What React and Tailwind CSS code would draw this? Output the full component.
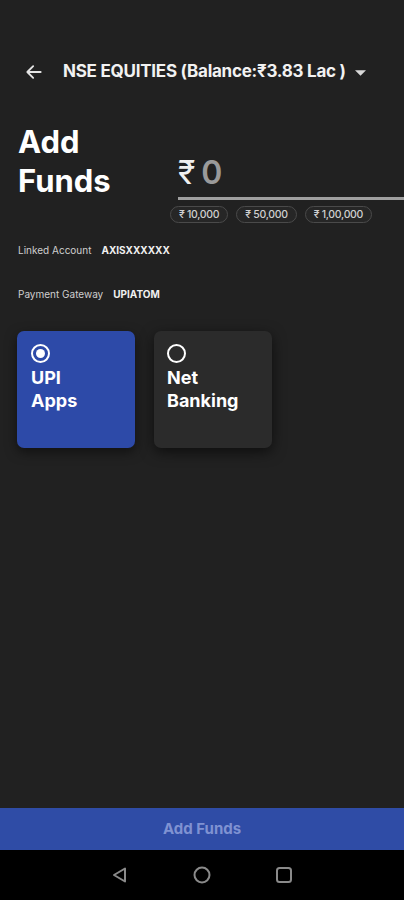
import React from "react";

const chips = ["₹ 10,000", "₹ 50,000", "₹ 1,00,000"];

const details = [
    { label: "Linked Account", value: "AXISXXXXXX" },
    { label: "Payment Gateway", value: "UPIATOM" },
];

const Radio = ({ checked }) => (
    <div className="w-[19px] h-[19px] rounded-full border-2 border-white flex items-center justify-center">
        {checked && <div className="w-[9px] h-[9px] rounded-full bg-white" />}
    </div>
);

export default function App() {
    return (
        <div
            className="w-[404px] h-[900px] bg-[#212121] flex flex-col text-white"
            style={{ fontFamily: "Inter, 'Noto Sans', sans-serif" }}
        >
            <div className="flex-1 flex flex-col">
                {/* header */}
                <div className="flex items-center h-[44px] mt-[50px] pl-[24px]">
                    <svg width="20" height="20" viewBox="0 0 24 24" fill="none" stroke="#e5e5e5" strokeWidth="2.2" strokeLinecap="round" strokeLinejoin="round">
                        <path d="M20 12H5" />
                        <path d="M11 5l-7 7 7 7" />
                    </svg>
                    <span className="ml-[19px] text-[17px] font-bold tracking-[-0.25px] text-[#f2f2f2]">
                        NSE EQUITIES (Balance:₹3.83 Lac )
                    </span>
                    <svg className="ml-[9px] mt-[1px]" width="11" height="6" viewBox="0 0 10 5">
                        <path d="M0 0h10L5 5z" fill="#d8d8d8" />
                    </svg>
                </div>

                {/* title + amount */}
                <div className="flex mt-[28px]">
                    <h1 className="pl-[18px] w-[170px] text-[31px] leading-[39px] font-bold">
                        Add
                        <br />
                        Funds
                    </h1>
                    <div className="flex-1 pt-[32px]">
                        <div className="ml-[8px] flex items-baseline text-[32px] leading-[38px]">
                            <span className="text-[#f0f0f0]">₹</span>
                            <span className="ml-[6px] text-[#9a9a9a] font-semibold">0</span>
                        </div>
                        <div className="ml-[8px] mt-[5px] h-[3px] bg-[#a0a0a0]" />
                        <div className="flex gap-[8px] mt-[6px]">
                            {chips.map((c) => (
                                <span
                                    key={c}
                                    className="h-[17px] px-[8px] rounded-full border border-[#4a4a4a] bg-[#262626] text-[10.5px] leading-[15px] font-medium text-[#d0d0d0] tracking-[-0.3px]"
                                >
                                    {c}
                                </span>
                            ))}
                        </div>
                    </div>
                </div>

                {/* details */}
                <div className="pl-[18px] mt-[21px] flex flex-col gap-[31px]">
                    {details.map((d) => (
                        <div key={d.label} className="flex items-center text-[10px] leading-[13px]">
                            <span className="text-[#cfcfcf]">{d.label}</span>
                            <span className="ml-[10px] font-bold text-[#f0f0f0]">{d.value}</span>
                        </div>
                    ))}
                </div>

                {/* payment modes */}
                <div className="flex gap-[19px] pl-[17px] mt-[30px]">
                    <div className="w-[118px] h-[117px] rounded-[7px] bg-[#2d4aa8] pl-[14px] pt-[13px] shadow-[0_4px_12px_rgba(0,0,0,0.5)]">
                        <Radio checked />
                        <p className="mt-[3px] text-[18px] leading-[23px] font-bold">
                            UPI
                            <br />
                            Apps
                        </p>
                    </div>
                    <div className="w-[118px] h-[117px] rounded-[7px] bg-[#2b2b2b] pl-[13px] pt-[13px] shadow-[0_4px_14px_rgba(0,0,0,0.6)]">
                        <Radio />
                        <p className="mt-[3px] text-[18px] leading-[23px] font-bold">
                            Net
                            <br />
                            Banking
                        </p>
                    </div>
                </div>
            </div>

            {/* bottom button */}
            <button className="h-[42px] w-full bg-[#2f4ca6] text-[15px] font-bold text-[#7f92d2]">
                Add Funds
            </button>

            {/* nav bar */}
            <div className="h-[50px] bg-black flex items-center justify-center gap-[64px]">
                <svg width="18" height="18" viewBox="0 0 18 18" fill="none" stroke="#8a8a8a" strokeWidth="2" strokeLinejoin="round">
                    <path d="M14 2.5v13L3 9z" />
                </svg>
                <svg width="18" height="18" viewBox="0 0 18 18" fill="none" stroke="#8a8a8a" strokeWidth="2">
                    <circle cx="9" cy="9" r="7.5" />
                </svg>
                <svg width="18" height="18" viewBox="0 0 18 18" fill="none" stroke="#8a8a8a" strokeWidth="2">
                    <rect x="2" y="2" width="14" height="14" rx="2.5" />
                </svg>
            </div>
        </div>
    );
}
